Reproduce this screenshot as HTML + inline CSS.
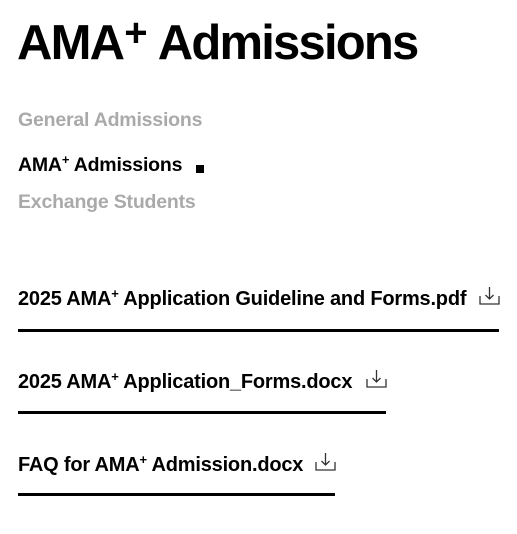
<!DOCTYPE html>
<html><head><meta charset="utf-8"><style>
body{margin:0;width:517px;height:534px;background:#fff;font-family:"Liberation Sans",Arial,sans-serif;position:relative;overflow:hidden;color:#000}
.a{position:absolute;white-space:nowrap;font-weight:bold}
h1{position:absolute;left:17px;top:8px;margin:0;font-size:49px;letter-spacing:-1.8px;font-weight:bold;line-height:70px}
h1 sup{font-size:40px;position:relative;top:-13px;vertical-align:baseline;margin-left:1px;margin-right:2px}
.nav{font-size:19.5px;left:18px;line-height:22px;letter-spacing:-0.2px}
.g{color:#aaa}
sup.s{font-size:13px;vertical-align:baseline;position:relative;top:-7px}
.doc{font-size:20px;left:18px;line-height:22px;letter-spacing:-0.2px}
.ln{position:absolute;left:18px;height:3px;background:#000}
svg{position:absolute}
</style></head><body>
<h1>AMA<sup>+</sup> Admissions</h1>
<div class="a nav g" style="top:109px">General Admissions</div>
<div class="a nav" style="top:154px">AMA<sup class="s">+</sup> Admissions</div>
<div style="position:absolute;left:196px;top:165px;width:8px;height:8px;background:#000"></div>
<div class="a nav g" style="top:191px">Exchange Students</div>

<div class="a doc" style="top:288px">2025 AMA<sup class="s">+</sup> Application Guideline and Forms.pdf</div>
<svg style="left:479px;top:286px" width="21" height="20" viewBox="0 0 21 20" fill="none" stroke="#333" stroke-width="1.3"><path d="M1 10v8h19v-8M10.5 1v12M6.5 9l4 4 4-4"/></svg>
<div class="ln" style="top:329px;width:481px"></div>

<div class="a doc" style="top:371px">2025 AMA<sup class="s">+</sup> Application_Forms.docx</div>
<svg style="left:366px;top:369px" width="21" height="20" viewBox="0 0 21 20" fill="none" stroke="#333" stroke-width="1.3"><path d="M1 10v8h19v-8M10.5 1v12M6.5 9l4 4 4-4"/></svg>
<div class="ln" style="top:411px;width:368px"></div>

<div class="a doc" style="top:454px">FAQ for AMA<sup class="s">+</sup> Admission.docx</div>
<svg style="left:315px;top:452px" width="21" height="20" viewBox="0 0 21 20" fill="none" stroke="#333" stroke-width="1.3"><path d="M1 10v8h19v-8M10.5 1v12M6.5 9l4 4 4-4"/></svg>
<div class="ln" style="top:493px;width:317px"></div>
</body></html>
